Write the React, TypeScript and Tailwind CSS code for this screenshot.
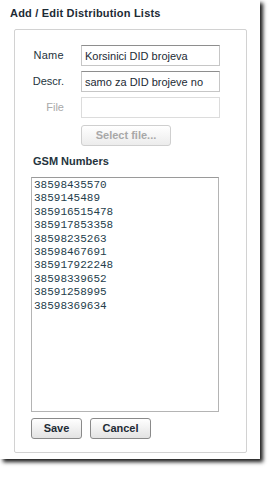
const numbers = [
  "38598435570",
  "3859145489",
  "385916515478",
  "385917853358",
  "38598235263",
  "38598467691",
  "385917922248",
  "38598339652",
  "38591258995",
  "38598369634",
];

export default function App() {
  return (
    <div className="w-[272px] h-[483px] bg-white font-['Liberation_Sans',Arial,sans-serif] text-[11px] text-[#25343d]">
      <div className="w-[260px] h-[459px] bg-white shadow-[3px_3px_4px_rgba(0,0,0,0.9)] pt-[7px] pl-[10px]">
        {/* Title */}
        <h1 className="font-bold text-[11px] leading-[13px] tracking-[0.2px] text-[#1d2b35]">Add / Edit Distribution Lists</h1>

        {/* Fieldset box */}
        <div className="mt-[9px] ml-[4px] w-[233px] h-[424px] border border-[#d2d2d2] rounded-[2px] pt-[15px] pl-[16px]">
          <div className="flex flex-col gap-[5px]">
            <div className="flex items-center">
              <label className="w-[33px] text-right leading-[13px] tracking-[0.3px]">Name</label>
              <input
                className="ml-[17px] w-[139px] h-[21px] px-[3px] border border-[#c6c6c6] border-t-[#8e8e8e] text-[11px] text-[#1d2b35] outline-none"
                defaultValue="Korsinici DID brojeva"
              />
            </div>
            <div className="flex items-center">
              <label className="w-[33px] text-right leading-[13px]">Descr.</label>
              <input
                className="ml-[17px] w-[139px] h-[21px] px-[3px] border border-[#c6c6c6] border-t-[#8e8e8e] text-[11px] text-[#1d2b35] outline-none"
                defaultValue="samo za DID brojeve no"
              />
            </div>
            <div className="flex items-center">
              <label className="w-[33px] text-right leading-[13px] text-[#a9a9a9]">File</label>
              <input
                disabled
                className="ml-[17px] w-[139px] h-[21px] px-[3px] border border-[#dcdcdc] bg-white outline-none"
              />
            </div>
          </div>

          <button
            disabled
            className="mt-[7px] ml-[50px] w-[90px] h-[21px] rounded-[3px] border border-[#cfcfcf] bg-gradient-to-b from-white to-[#ececec] font-bold text-[11px] text-[#a8a8a8]"
          >
            Select file...
          </button>

          <div className="mt-[9px] ml-[2px] font-bold leading-[13px]">GSM Numbers</div>

          <div className="mt-[9px] w-[188px] h-[235px] border border-[#b4b4b4] border-t-[#9a9a9a] pt-[1px] pl-[2px] font-['Liberation_Mono','Courier_New',monospace] text-[11px] leading-[13.4px] text-[#25404c]">
            {numbers.map((n) => (
              <div key={n}>{n}</div>
            ))}
          </div>

          <div className="mt-[6px] flex gap-[8px]">
            <button className="w-[51px] h-[21px] rounded-[3px] border border-[#8a8a8a] bg-gradient-to-b from-white to-[#e3e3e3] font-bold text-[11px] text-[#1d2b35]">
              Save
            </button>
            <button className="w-[61px] h-[21px] rounded-[3px] border border-[#8a8a8a] bg-gradient-to-b from-white to-[#e3e3e3] font-bold text-[11px] text-[#1d2b35]">
              Cancel
            </button>
          </div>
        </div>
      </div>
    </div>
  );
}
